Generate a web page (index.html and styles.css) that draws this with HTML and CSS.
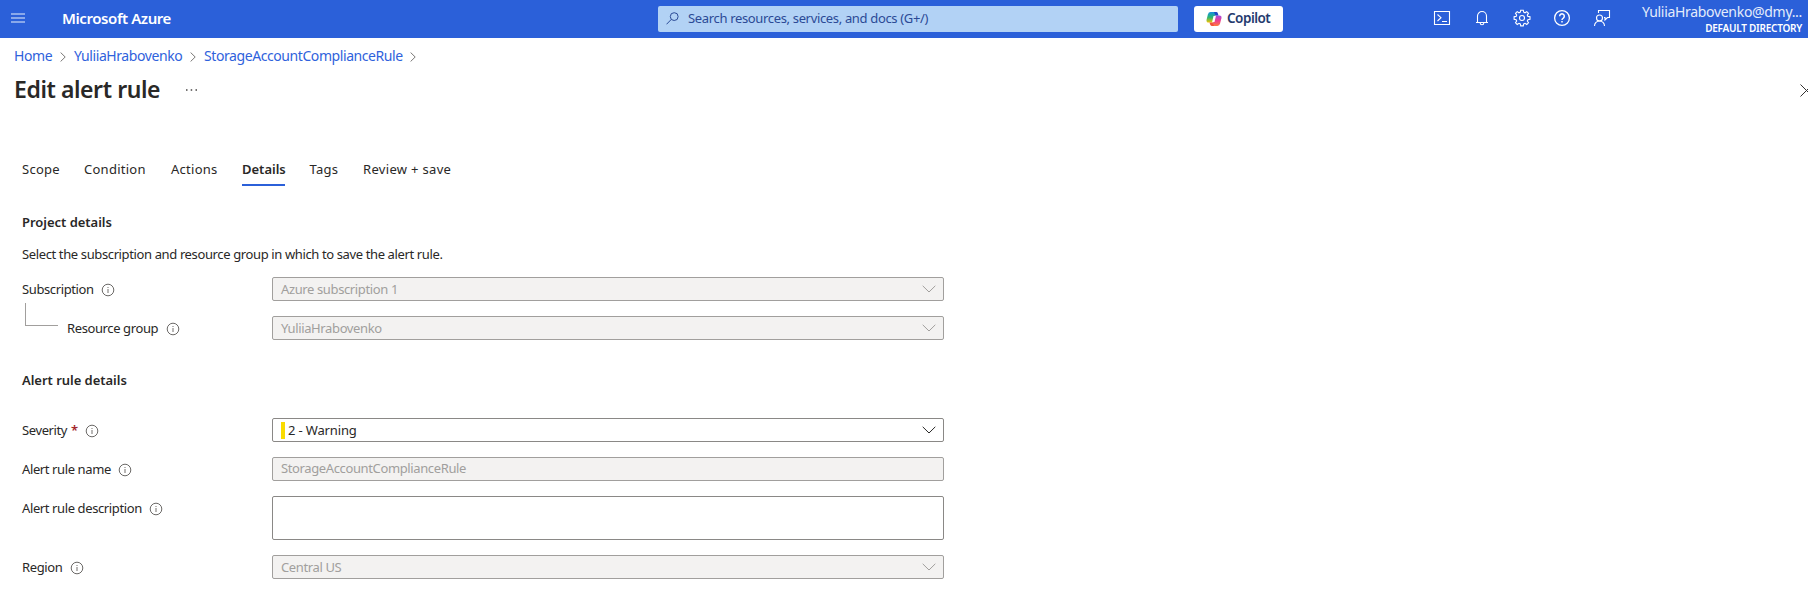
FILE: index.html
```html
<!DOCTYPE html>
<html lang="en">
<head>
<meta charset="utf-8">
<title>Edit alert rule - Microsoft Azure</title>
<link rel="stylesheet" href="styles.css">
</head>
<body>
<svg class="defs" aria-hidden="true">
  <symbol id="info" viewBox="0 0 14 14"><circle cx="7" cy="7" r="5.800" fill="none" stroke="#6b6967"/><path d="M7 6v4M7 4v1" stroke="#8a8886" stroke-width="1.200" fill="none"/></symbol>
  <symbol id="down" viewBox="0 0 14 8"><path d="M.7 .8 7 7 13.300 .8" fill="none" stroke="currentColor"/></symbol>
  <symbol id="next" viewBox="0 0 6 10"><path d="M.6 .5 5.200 5 .6 9.500" fill="none" stroke="currentColor"/></symbol>
</svg>

<header class="topbar">
  <svg class="menu" viewBox="0 0 14 10"><path d="M0 1h14M0 5h14M0 9h14" stroke="#a9c0f0" stroke-width="1.600"/></svg>
  <span class="brand">Microsoft Azure</span>
  <div class="search">
    <svg class="lens" viewBox="0 0 13 13"><circle cx="8.200" cy="4.600" r="3.900"/><path d="M5.300 7.400.5 12.300"/></svg>
    <span>Search resources, services, and docs (G+/)</span>
  </div>
  <div class="copilot">
    <svg class="logo" viewBox="0 0 16 16">
      <defs>
        <linearGradient id="ga" x1="0" y1="0" x2="0" y2="1"><stop offset="0" stop-color="#1590e0"/><stop offset=".5" stop-color="#2bb673"/><stop offset="1" stop-color="#f5c400"/></linearGradient>
        <linearGradient id="gb" x1="0" y1="0" x2="0" y2="1"><stop offset="0" stop-color="#a54de0"/><stop offset=".5" stop-color="#ee3f8f"/><stop offset="1" stop-color="#ff7a3c"/></linearGradient>
      </defs>
      <path fill="url(#ga)" d="M4.600 1h5.200L7 11.600H2.600Q0 11.600 .6 8.800L1.900 3.400Q2.500 1 4.600 1Z"/>
      <path fill="url(#gb)" d="M11.400 15H6.200L9 4.400h4.400Q16 4.400 15.400 7.200L14.100 12.600Q13.500 15 11.400 15Z"/>
      <path fill="#1b48c4" d="M8 1h2.300q1.200 0 1.600 1.400l.6 2H9.400Z"/>
      <path fill="#f0523a" d="M8 15H5.700q-1.200 0-1.600-1.400l-.6-2h3.100Z"/>
      <path fill="#fff" d="M7.500 5h2.400L8.500 11H6.100Z"/>
    </svg>
    <span>Copilot</span>
  </div>
  <nav class="tools">
    <svg viewBox="0 0 18 18"><path d="M1.500 2.500h15v13h-15ZM4.500 5.500 8 8.700 4.500 12M9 12.500h5"/></svg>
    <svg viewBox="0 0 18 18"><path d="M4.500 13.500V7a4.500 4.500 0 0 1 9 0v6.500M3 13.500h12M7.200 14a1.800 1.800 0 0 0 3.600 0"/></svg>
    <svg viewBox="0 0 18 18"><circle cx="9" cy="9" r="2.500"/><path d="M7.700 1.200h2.600l.4 2 1.300.6 1.800-1.200 1.700 1.700-1.200 1.800.6 1.300 2.100.4v2.500l-2.100.4-.6 1.300 1.200 1.800-1.700 1.700-1.800-1.200-1.300.6-.4 2H7.700l-.4-2-1.300-.6-1.800 1.200-1.700-1.700 1.200-1.800-.6-1.300-2-.4V7.800l2-.4.6-1.300-1.200-1.800 1.700-1.700L6 3.800l1.300-.6Z"/></svg>
    <svg viewBox="0 0 18 18"><circle cx="9" cy="9" r="7.400" stroke-width="1.300"/><path stroke-width="1.500" d="M6.700 7.200a2.300 2.300 0 1 1 3.600 1.900Q9 9.900 9 11M9 12v1.500"/></svg>
    <svg viewBox="0 0 18 18"><circle cx="6.500" cy="9" r="3"/><path d="M1.500 17a5 5 0 0 1 10 0M5.500 4V1.500h11v7h-2L12 11V8.500h-1"/></svg>
  </nav>
  <div class="account">
    <span class="mail">YuliiaHrabovenko@dmy...</span>
    <span class="dir">DEFAULT DIRECTORY</span>
  </div>
</header>

<nav class="crumbs">
  <a class="c1">Home</a><svg><use href="#next"/></svg>
  <a class="c2">YuliiaHrabovenko</a><svg><use href="#next"/></svg>
  <a class="c3">StorageAccountComplianceRule</a><svg><use href="#next"/></svg>
</nav>

<div class="titlebar">
  <h1>Edit alert rule</h1>
  <svg class="dots" viewBox="0 0 11 2"><path d="M0 1h1.500M4.700 1h1.500M9.500 1H11" stroke="#484644" stroke-width="1.500"/></svg>
  <svg class="close" viewBox="0 0 13 13"><path d="M.5.500l12 12M12.500.500l-12 12" stroke="#323130"/></svg>
</div>

<main>
  <nav class="tabs">
    <span class="t1">Scope</span><span class="t2">Condition</span><span class="t3">Actions</span><span class="t4 active">Details</span><span class="t5">Tags</span><span class="t6">Review + save</span>
  </nav>

  <h2>Project details</h2>
  <p>Select the subscription and resource group in which to save the alert rule.</p>

  <div class="row">
    <label><span>Subscription</span><svg><use href="#info"/></svg></label>
    <div class="field disabled"><span>Azure subscription 1</span><svg><use href="#down"/></svg></div>
  </div>
  <div class="row">
    <label class="child"><i class="branch"></i><span>Resource group</span><svg><use href="#info"/></svg></label>
    <div class="field disabled"><span>YuliiaHrabovenko</span><svg><use href="#down"/></svg></div>
  </div>

  <h2 class="second">Alert rule details</h2>

  <div class="row">
    <label class="sev"><span>Severity <b>*</b></span><svg><use href="#info"/></svg></label>
    <div class="field"><i class="level"></i><span class="warn">2 - Warning</span><svg><use href="#down"/></svg></div>
  </div>
  <div class="row">
    <label><span>Alert rule name</span><svg><use href="#info"/></svg></label>
    <div class="field disabled text"><span>StorageAccountComplianceRule</span></div>
  </div>
  <div class="row">
    <label><span>Alert rule description</span><svg><use href="#info"/></svg></label>
    <div class="field area"></div>
  </div>
  <div class="row">
    <label><span>Region</span><svg><use href="#info"/></svg></label>
    <div class="field disabled"><span>Central US</span><svg><use href="#down"/></svg></div>
  </div>
</main>
</body>
</html>
```
FILE: styles.css
```css
* { box-sizing: border-box; }
body {
  margin: 0;
  height: 600px;
  overflow: hidden;
  background: #fff;
  color: #292827;
  font: 13px/20px "Noto Sans", "Open Sans", sans-serif;
  letter-spacing: -0.375px;
  white-space: nowrap;
}
svg { display: block; flex: none; }
.defs { width: 0; height: 0; position: absolute; }

.topbar {
  display: flex;
  align-items: center;
  height: 38px;
  padding-bottom: 2px;
  background: #2b60d9;
  color: #fff;
}
.menu { width: 14px; height: 10px; margin-left: 11px; }
.brand { width: 596px; margin-left: 37px; padding-bottom: 1px; font-size: 15px; font-weight: 600; letter-spacing: -0.42px; }
.search {
  display: flex;
  align-items: center;
  width: 520px;
  height: 26px;
  padding: 0 0 2px 8px;
  margin-top: 1px;
  border-radius: 2px;
  background: #b2d2f5;
  color: #2b4a96;
  letter-spacing: -0.34px;
}
.lens { width: 13px; height: 13px; margin: 1px 9px 0 0; fill: none; stroke: #2b4a96; }
.copilot {
  display: flex;
  align-items: center;
  width: 89px;
  height: 26px;
  margin: 1px 0 0 16px;
  padding: 0 0 2px 12px;
  border-radius: 3px;
  background: #fff;
  color: #243a6e;
  font-size: 13.5px;
  font-weight: 600;
  letter-spacing: -0.5px;
}
.logo { width: 16px; height: 16px; margin: 2px 5px 0 0; }
.tools { display: flex; gap: 22px; margin-left: 150px; }
.tools svg { width: 18px; height: 18px; fill: none; stroke: #fff; stroke-width: 1.1; }
.account { display: flex; flex-direction: column; align-items: flex-end; margin-left: auto; padding: 1px 6px 0 0; }
.mail { font-size: 14px; line-height: 18px; letter-spacing: -0.31px; color: #e4ecfb; }
.dir { font-size: 10px; line-height: 14px; font-weight: 600; letter-spacing: -0.25px; }

.crumbs { display: flex; align-items: center; height: 36px; padding-left: 14px; color: #2f62dc; font-size: 14px; letter-spacing: -0.42px; }
.crumbs svg { width: 6px; height: 10px; margin: 1px 8px 0 9px; color: #797775; }
.c1 { width: 37px; }
.c2 { width: 107px; }
.c3 { width: 197px; }

.titlebar { display: flex; align-items: center; height: 32px; padding-left: 14px; }
h1 { margin: 0; width: 172px; font-size: 23px; line-height: 30px; padding-bottom: 2px; font-weight: 600; letter-spacing: -0.42px; }
.dots { width: 11px; height: 2px; }
.close { width: 13px; height: 13px; margin: 0 -5px 0 auto; }

main { padding: 49px 0 0 22px; }
.tabs { display: flex; height: 31px; line-height: 28px; letter-spacing: 0.26px; }
.t1 { width: 62px; }
.t2 { width: 87px; }
.t3 { width: 71px; }
.t4 { width: 43px; margin-right: 24.5px; font-weight: 600; letter-spacing: 0; }
.t5 { width: 53.5px; }
.t6 { letter-spacing: 0.32px; }
.active { border-bottom: 2px solid #2b60d9; }

h2 { margin: 26px 0 0; font-size: 13px; line-height: 20px; font-weight: 600; letter-spacing: -0.03px; }
p { margin: 12px 0 13px; }
.second { margin: 30px 0 28px; }

.row { display: flex; margin-bottom: 15px; }
label { position: relative; display: flex; width: 250px; height: 24px; line-height: 24px; letter-spacing: -0.39px; }
label svg { width: 14px; height: 14px; margin: 6px 0 0 7.5px; }
label b { color: #a4262c; font-weight: 600; margin-left: 1px; }
.child { padding-left: 45px; }
.branch { position: absolute; left: 3px; top: -13px; width: 33px; height: 23px; border: solid #a19f9d; border-width: 0 0 1px 1px; }
.field {
  display: flex;
  align-items: center;
  width: 672px;
  height: 24px;
  padding: 0 7px 0 8px;
  border: 1px solid #8a8886;
  border-radius: 2px;
}
.field svg { width: 14px; height: 8px; margin-left: auto; }
.disabled { background: #f3f2f1; border-color: #a19f9d; color: #a19f9d; }
.text { padding-bottom: 2px; }
.area { height: 44px; }
.level { width: 4px; height: 17px; margin-right: 3px; background: #fadb00; }
.warn { letter-spacing: -0.15px; }
```
